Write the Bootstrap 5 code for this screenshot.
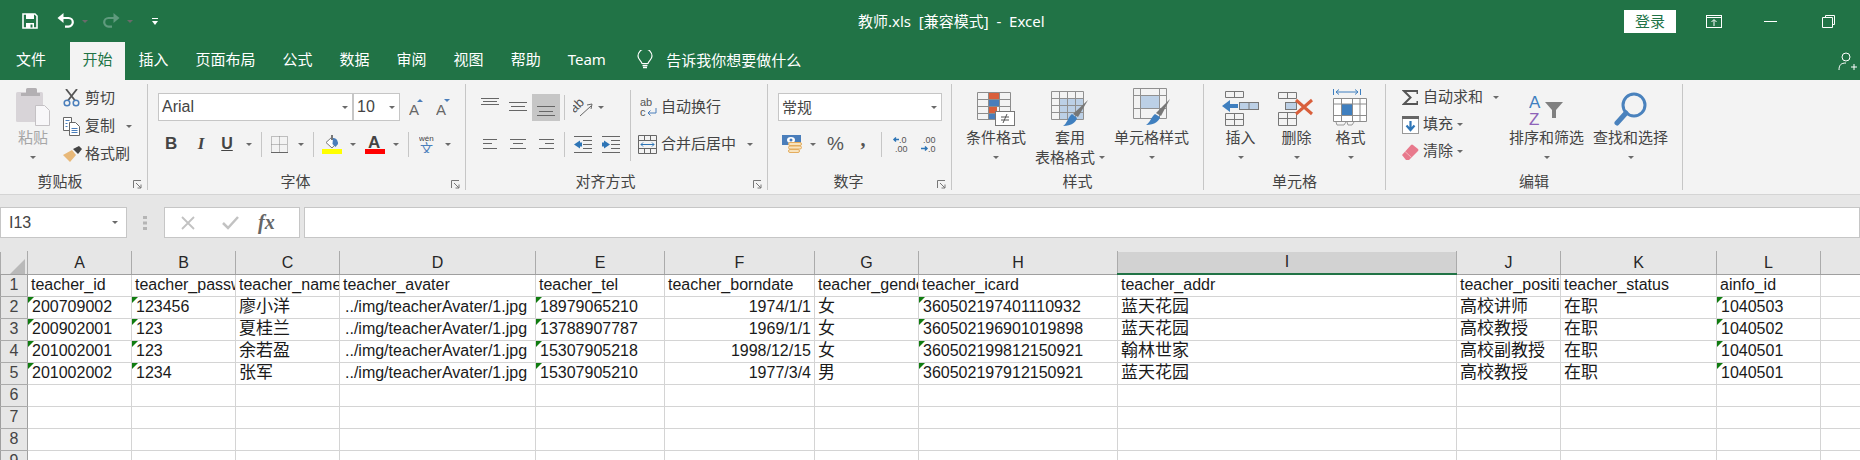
<!DOCTYPE html>
<html lang="zh-CN">

<head>
  <meta charset="UTF-8">
  <meta name="viewport" content="width=device-width, initial-scale=1.0">
  <title>教师.xls</title>
  <link href="https://cdn.jsdelivr.net/npm/bootstrap@5.3.0/dist/css/bootstrap.min.css" rel="stylesheet">
  <style>
    html, body { height: 460px; overflow: hidden; }
    body {
      background: #fff;
      color: #444;
      font-family: "Noto Sans", "Noto Sans CJK SC", sans-serif;
      font-size: 15px;
    }
    svg { display: block; flex: none; }
    .xl-title { height: 42px; background: #217346; color: #fff; }
    .xl-title-left { width: 858px; }
    .xl-login {
      width: 52px; height: 23px; padding: 0; border: 0; border-radius: 0;
      background: #fff; color: #217346; font-size: 15px; line-height: 23px;
    }
    .xl-login:hover { background: #fff; color: #217346; }
    .xl-wcaret { border-top-color: #fff; }
    .xl-dcaret { border-top-color: #5f9a7d; }
    .xl-tail { width: 25px; }
    .xl-tabs { height: 38px; background: #217346; color: #fff; position: relative; }
    .xl-tabs .nav-link { padding: 0 13.5px; color: #fff; line-height: 34px; height: 38px; font-size: 15px; }
    .xl-tabs .nav-link.active { background: #f3f3f3; color: #217346; padding: 0 12.5px; margin-left: 10.5px; }
    .xl-first { margin-left: 2.5px; }
    .xl-ask { font-size: 15px; padding-bottom: 2px; }
    .xl-person { position: absolute; right: 3px; top: 10px; }

    .xl-ribbon { height: 115px; background: #f3f3f3; border-bottom: 1px solid #d4d4d4; color: #444; }
    .rb-group { position: relative; height: 106px; margin-top: 4px; border-right: 1px solid #c6c6c6; flex: none; }
    .g1 { width: 148px; } .g2 { width: 318px; } .g3 { width: 302px; }
    .g4 { width: 184px; } .g5 { width: 252px; } .g6 { width: 182px; } .g7 { width: 297px; }
    .rb-body { height: 88px; }
    .rb-label { height: 18px; line-height: 18px; text-align: center; white-space: nowrap; }
    .has-launch { padding-right: 22px; }
    .g1 .has-launch { padding-right: 27px; }
    .rb-launch { position: absolute; right: 5px; bottom: 1px; }
    .rb-big { display: flex; flex-direction: column; align-items: center; flex: none; white-space: nowrap; }
    .rb-ico { height: 44px; padding-bottom: 2px; display: flex; align-items: flex-end; justify-content: center; }
    .rb-line { height: 20px; line-height: 18px; }
    .rb-line2 { height: 19px; line-height: 17px; display: flex; align-items: center; justify-content: center; }
    .rb-row { height: 28px; display: flex; align-items: center; white-space: nowrap; }
    .rb-row27 { height: 27px; display: flex; align-items: center; white-space: nowrap; }
    .rb-row26 { height: 26px; margin-top: 10px; display: flex; align-items: center; white-space: nowrap; }
    .rb-txt { padding-bottom: 2px; }
    .rb-caret {
      display: block; flex: none; width: 0; height: 0;
      border-left: 3px solid transparent; border-right: 3px solid transparent; border-top: 3px solid #6a6a6a;
    }
    .rb-sep { width: 1px; height: 25px; background: #c6c6c6; flex: none; }
    .rb-sep-tall { width: 1px; height: 71px; margin-top: 6px; background: #c6c6c6; flex: none; }
    .rb-combo {
      height: 28px; background: #fff; border: 1px solid #c6c6c6; padding: 0 4px 0 3px;
      display: flex; align-items: center; justify-content: space-between; flex: none;
      color: #444; font-size: 16px;
    }
    .rb-font { width: 195px; font-family: "Liberation Sans", sans-serif; }
    .rb-size { width: 47px; font-family: "Liberation Sans", sans-serif; }
    .rb-fmt { width: 164px; font-size: 15px; }
    .rb-b { width: 12px; text-align: center; font: bold 17px "Liberation Sans", sans-serif; color: #444; }
    .rb-i { width: 10px; text-align: center; font: italic bold 17px "Liberation Serif", serif; color: #444; }
    .rb-u { width: 12px; text-align: center; font: bold 16px "Liberation Sans", sans-serif; color: #444; text-decoration: underline; }
    .rb-pct { width: 16px; text-align: center; font: 19px "Liberation Sans", sans-serif; color: #555; }
    .rb-comma { width: 6px; padding-bottom: 10px; text-align: center; font: bold 20px "Liberation Serif", serif; color: #555; line-height: 14px; }
    .rb-muted { color: #a6a6a6; }
    .cw22 { width: 22px; flex: none; } .cw21 { width: 21px; flex: none; }
    .cw60 { width: 60px; } .cw62 { width: 62px; } .cw72 { width: 72px; } .cw75 { width: 75px; } .cw37 { width: 37px; }
    .cw107 { width: 107px; flex: none; } .cw164 { width: 164px; flex: none; }
    .ml4 { margin-left: 4px; } .ml3 { margin-left: 3px; } .ml5 { margin-left: 5px; }
    .ml7 { margin-left: 7px; } .ml8 { margin-left: 8px; } .ml9 { margin-left: 9px; } .ml10 { margin-left: 10px; }
    .ml11 { margin-left: 11px; } .ml12 { margin-left: 12px; } .ml13 { margin-left: 13px; } .ml14 { margin-left: 14px; }
    .ml15 { margin-left: 15px; } .ml16 { margin-left: 16px; } .ml17 { margin-left: 17px; } .ml18 { margin-left: 18px; }
    .ml19 { margin-left: 19px; } .ml22 { margin-left: 22px; } .ml27 { margin-left: 27px; } .ml30 { margin-left: 30px; }
    .ml42 { margin-left: 42px; } .ml45 { margin-left: 45px; }
    .pt9 { padding-top: 9px; } .pt10 { padding-top: 10px; }

    .xl-fbar { height: 56px; background: #e6e6e6; padding-top: 12px; }
    .xl-box { height: 31px; background: #fff; border: 1px solid #c6c6c6; flex: none; }
    .xl-name { width: 127px; padding: 0 8px; font: 16px "Liberation Sans", sans-serif; color: #444; }
    .xl-fx { width: 136px; }
    .xl-input { flex: 1 1 auto; margin-left: 4px; min-width: 0; }
    .xl-dots { margin-top: 9px; }
    .xl-fxtext { font: italic bold 20px "Liberation Serif", serif; color: #666; }

    .xl-sheet {
      table-layout: fixed; width: 1860px; margin: 0;
      font: 16px/20px "Liberation Sans", "Noto Sans CJK SC", sans-serif; color: #1a1a1a;
    }
    .xl-sheet>:not(caption)>*>* {
      padding: 0 3px 1px; height: 22px; border: 1px solid #d4d4d4; background: #fff; color: #1a1a1a;
      white-space: nowrap; overflow: hidden; position: relative; box-shadow: none;
    }
    .xl-sheet>thead>tr>th {
      height: 21px; background: #e6e6e6; color: #262626; font-weight: 400; text-align: center; padding: 0 0 1px;
      border-color: #e6e6e6 #ababab #9f9f9f #ababab;
    }
    .xl-sheet>thead>tr>th.xl-cur { background: #d2d2d2; border-bottom: 2px solid #217346; }
    .xl-sheet>tbody>tr>th {
      background: #e6e6e6; color: #444; font-weight: 400; text-align: center; padding: 0 0 1px;
      border-color: #ababab #9f9f9f;
    }
    .xl-sheet>thead>tr>th.xl-corner { padding: 0; }
    .xl-corner svg { margin: 3px 0 0 9px; }
    .xl-cjk { font-size: 17px; }
    .xl-sheet>tbody>tr>td.xl-wide { padding-left: 5px; }
    .xl-sheet>tbody>tr>td.xl-mark { padding-left: 4px; }
    .xl-mark::before {
      content: ""; position: absolute; left: 0; top: 0; width: 0; height: 0;
      border-top: 6px solid #107c10; border-right: 6px solid transparent;
    }
  </style>
</head>

<body>
  <!-- title bar -->
  <div class="xl-title d-flex align-items-center">
    <div class="xl-title-left d-flex align-items-center">
      <svg class="ml22" width="16" height="16" viewBox="0 0 16 16"><path d="M1 1h12l2 2v12H1z" fill="none" stroke="#fff" stroke-width="1.6"/><path d="M4 1h8v5H4zM4 10h8v5H4z" fill="#fff"/><rect x="8.5" y="11.5" width="2" height="3" fill="#217346"/></svg>
      <svg class="ml19" width="18" height="16" viewBox="0 0 18 16"><path d="M5 5h6.5a4.3 4.3 0 0 1 0 8.6H8" fill="none" stroke="#fff" stroke-width="2.2"/><path d="M6.5 0 0.5 5l6 5z" fill="#fff"/></svg>
      <i class="rb-caret ml7 xl-wcaret"></i>
      <svg class="ml14" width="18" height="16" viewBox="0 0 18 16"><path d="M13 5H6.500a4.300 4.300 0 0 0 0 8.600H10" fill="none" stroke="#5f9a7d" stroke-width="2.200"/><path d="M11.500 0l6 5-6 5z" fill="#5f9a7d"/></svg>
      <i class="rb-caret ml7 xl-dcaret"></i>
      <svg class="ml19" width="6" height="7" viewBox="0 0 6 7"><rect width="6" height="1" fill="#fff"/><path d="M0 3h6L3 7z" fill="#fff"/></svg>
    </div>
    <div class="text-nowrap">教师.xls&nbsp; [兼容模式]&nbsp; -&nbsp; Excel</div>
    <div class="ms-auto d-flex align-items-center">
      <button class="btn xl-login" type="button">登录</button>
      <svg class="ml30" width="16" height="13" viewBox="0 0 16 13"><rect x=".5" y=".5" width="15" height="12" fill="none" stroke="#fff"/><path d="M.5 2.500h15M8 11V5M5.500 7 8 4.500 10.500 7" fill="none" stroke="#fff"/></svg>
      <svg class="ml42" width="13" height="1" viewBox="0 0 13 1"><rect width="13" height="1" fill="#fff"/></svg>
      <svg class="ml45" width="13" height="13" viewBox="0 0 13 13"><path d="M3.500 2.500V.5h9v9h-2M.5 2.500h10v10H.5z" fill="none" stroke="#fff"/></svg>
      <div class="xl-tail"></div>
    </div>
  </div>

  <!-- tabs -->
  <div class="xl-tabs d-flex">
    <ul class="nav flex-nowrap text-nowrap">
      <li class="nav-item xl-first"><a class="nav-link" href="#">文件</a></li>
      <li class="nav-item"><a class="nav-link active" href="#">开始</a></li>
      <li class="nav-item"><a class="nav-link" href="#">插入</a></li>
      <li class="nav-item"><a class="nav-link" href="#">页面布局</a></li>
      <li class="nav-item"><a class="nav-link" href="#">公式</a></li>
      <li class="nav-item"><a class="nav-link" href="#">数据</a></li>
      <li class="nav-item"><a class="nav-link" href="#">审阅</a></li>
      <li class="nav-item"><a class="nav-link" href="#">视图</a></li>
      <li class="nav-item"><a class="nav-link" href="#">帮助</a></li>
      <li class="nav-item"><a class="nav-link" href="#">Team</a></li>
    </ul>
    <div class="d-flex align-items-center xl-ask ml18">
      <svg width="16" height="20" viewBox="0 0 16 20"><path d="M5 13.500C4.500 11 1 9.500 1 6a7 7 0 0 1 14 0c0 3.500-3.500 5-4 7.500z" fill="none" stroke="#fff" stroke-width="1.200"/><path d="M5.500 15.500h5M6 17.500h4" stroke="#fff" stroke-width="1.300"/></svg>
      <span class="ml13">告诉我你想要做什么</span>
    </div>
    <svg class="xl-person" width="19" height="19" viewBox="0 0 19 19"><circle cx="8" cy="5" r="4" fill="none" stroke="#fff"/><path d="M1 18c0-5 2-7 7-7M13 15h6M16 12v6" fill="none" stroke="#fff"/></svg>
  </div>

  <!-- ribbon -->
  <div class="xl-ribbon d-flex">
    <!-- clipboard -->
    <div class="rb-group g1">
      <div class="rb-body d-flex">
        <div class="rb-big cw60 ml3">
          <div class="rb-ico">
            <svg width="34" height="38" viewBox="0 0 34 38"><rect y="4" width="27" height="30" rx="1.500" fill="#d8d4d8"/><path d="M5 8V5h5V1.500Q10 0 11.500 0h8Q21 0 21 1.500V5h3v3z" fill="#b3b0b3"/><path d="M19.500 17.500h9l5 5v15h-14z" fill="#f8f7f9" stroke="#c4c1c4"/></svg>
          </div>
          <div class="rb-line rb-muted">粘贴</div>
          <div class="rb-line2"><i class="rb-caret"></i></div>
        </div>
        <div>
          <div class="rb-row">
            <div class="cw22"><svg width="17" height="18" viewBox="0 0 17 18"><path d="M3 0l9 11.500M14 0 5 11.500" stroke="#555" stroke-width="1.800"/><circle cx="4" cy="14" r="2.800" fill="none" stroke="#4a7ebb" stroke-width="1.500"/><circle cx="13" cy="14" r="2.800" fill="none" stroke="#4a7ebb" stroke-width="1.500"/></svg></div>
            <span class="rb-txt">剪切</span>
          </div>
          <div class="rb-row">
            <div class="cw22"><svg width="17" height="19" viewBox="0 0 17 19"><path d="M.5.5h8v13H.5z" fill="#fff" stroke="#666"/><path d="M6.500 5.500h6l4 4v9h-10z" fill="#fff" stroke="#666"/><path d="M8.500 11.500h6M8.500 13.500h6M8.500 15.500h6M2.500 3.500h4M2.500 6.500h2M2.500 9.500h2" stroke="#4a7ebb"/></svg></div>
            <span class="rb-txt">复制</span><i class="rb-caret ml11"></i>
          </div>
          <div class="rb-row">
            <div class="cw22"><svg width="19" height="16" viewBox="0 0 19 16"><path d="M0 9l9-5 4 5-6 7z" fill="#e8b878"/><path d="M10 3l6-3 3 3-4 5z" fill="#444"/></svg></div>
            <span class="rb-txt">格式刷</span>
          </div>
        </div>
      </div>
      <div class="rb-label has-launch">剪贴板</div>
      <svg class="rb-launch" width="9" height="9" viewBox="0 0 9 9"><path d="M.5 8V.5H8M3 3l5 5M8 4.500V8H4.500" fill="none" stroke="#777"/></svg>
    </div>

    <!-- font -->
    <div class="rb-group g2">
      <div class="rb-body pt9 ml10">
        <div class="rb-row">
          <div class="rb-combo rb-font"><span>Arial</span><i class="rb-caret"></i></div>
          <div class="rb-combo rb-size"><span>10</span><i class="rb-caret"></i></div>
          <svg class="ml9" width="16" height="17" viewBox="0 0 16 17"><text x="0" y="16" font-family="Liberation Sans" font-size="15" fill="#666">A</text><path d="M8 3l3-3 3 3z" fill="#4a7ebb"/></svg>
          <svg class="ml11" width="16" height="17" viewBox="0 0 16 17"><text x="0" y="16" font-family="Liberation Sans" font-size="15" fill="#666">A</text><path d="M8 0h6l-3 3z" fill="#4a7ebb"/></svg>
        </div>
        <div class="rb-row26">
          <span class="rb-b ml7">B</span>
          <span class="rb-i ml19">I</span>
          <span class="rb-u ml15">U</span>
          <i class="rb-caret ml13"></i>
          <div class="rb-sep ml9"></div>
          <svg class="ml9" width="17" height="17" viewBox="0 0 17 17"><path d="M.5.5h16v16H.5zM8.500.5v16M.5 8.500h16" fill="none" stroke="#888" stroke-dasharray="1 1"/><path d="M0 16.500h17" stroke="#666"/></svg>
          <i class="rb-caret ml10"></i>
          <div class="rb-sep ml9"></div>
          <svg class="ml8" width="20" height="19" viewBox="0 0 20 19"><path d="M4 7.500 10 2l5 5.500-5 5.500z" fill="#fff" stroke="#777"/><path d="M9 0h2v5H9z" fill="#777"/><path d="M11 3c3 0 5 2 5 6l-2.500 3-3-3z" fill="#4a7ebb"/><rect y="14" width="20" height="5" fill="#ff0"/></svg>
          <i class="rb-caret ml8"></i>
          <svg class="ml9" width="20" height="19" viewBox="0 0 20 19"><text x="3" y="13" font-family="Liberation Sans" font-weight="bold" font-size="17" fill="#444">A</text><rect y="14" width="20" height="5" fill="#f00"/></svg>
          <i class="rb-caret ml8"></i>
          <div class="rb-sep ml9"></div>
          <svg class="ml10" width="16" height="18" viewBox="0 0 16 18"><text x="0" y="6" font-family="Liberation Sans" font-size="8" fill="#444">wén</text><text x="1" y="18" font-family="Noto Sans CJK SC" font-size="13" fill="#4a7ebb">文</text></svg>
          <i class="rb-caret ml10"></i>
        </div>
      </div>
      <div class="rb-label has-launch">字体</div>
      <svg class="rb-launch" width="9" height="9" viewBox="0 0 9 9"><path d="M.5 8V.5H8M3 3l5 5M8 4.500V8H4.500" fill="none" stroke="#777"/></svg>
    </div>

    <!-- alignment -->
    <div class="rb-group g3">
      <div class="rb-body d-flex">
        <div class="cw164 pt10">
          <div class="rb-row27">
            <svg class="ml15" width="18" height="27" viewBox="0 0 18 27"><path d="M0 4.500h18M2 7.500h14M0 10.500h18" stroke="#666"/></svg>
            <svg class="ml10" width="18" height="27" viewBox="0 0 18 27"><path d="M0 8.500h18M2 12.500h14M0 16.500h18" stroke="#666"/></svg>
            <svg class="ml5" width="28" height="27" viewBox="0 0 28 27"><rect width="28" height="27" fill="#c6c6c6"/><path d="M5 12.500h18M7 17.500h14M5 21.500h18" stroke="#666"/></svg>
            <div class="rb-sep ml4"></div>
            <svg class="ml8" width="20" height="18" viewBox="0 0 20 18"><text x="1" y="13" transform="rotate(-45 3 13)" font-family="Liberation Sans" font-size="13" fill="#555">ab</text><path d="M7 17 18 7M14 6l5-1-1 5" fill="none" stroke="#666"/></svg>
            <i class="rb-caret ml5"></i>
          </div>
          <div class="rb-row26">
            <svg class="ml17" width="14" height="10" viewBox="0 0 14 10"><path d="M0 .5h14M0 4.500h9M0 9.500h14" stroke="#666"/></svg>
            <svg class="ml13" width="16" height="10" viewBox="0 0 16 10"><path d="M0 .5h16M3 4.500h10M0 9.500h16" stroke="#666"/></svg>
            <svg class="ml13" width="15" height="10" viewBox="0 0 15 10"><path d="M0 .5h15M6 4.500h9M0 9.500h15" stroke="#666"/></svg>
            <div class="rb-sep ml10"></div>
            <svg class="ml9" width="18" height="17" viewBox="0 0 18 17"><path d="M0 .5h18M9 4.500h9M9 8.500h9M9 12.500h9M0 16.500h18" stroke="#666"/><path d="M6 4.500v2h2v4H6v2L0 8.500z" fill="#2e75b6"/></svg>
            <svg class="ml10" width="18" height="17" viewBox="0 0 18 17"><path d="M0 .5h18M9 4.500h9M9 8.500h9M9 12.500h9M0 16.500h18" stroke="#666"/><path d="M2 4.500v2H0v4h2v2l6-4z" fill="#2e75b6"/></svg>
          </div>
        </div>
        <div class="rb-sep-tall"></div>
        <div class="pt10">
          <div class="rb-row27">
            <svg class="ml9" width="17" height="19" viewBox="0 0 17 19"><text x="0" y="8" font-family="Liberation Sans" font-size="11" fill="#555">ab</text><text x="0" y="18" font-family="Liberation Sans" font-size="11" fill="#555">c</text><path d="M16 10v5H8M10.500 12.500 8 15l2.500 2.500" fill="none" stroke="#4a7ebb"/></svg>
            <span class="ml4 rb-txt">自动换行</span>
          </div>
          <div class="rb-row26">
            <svg class="ml7" width="19" height="19" viewBox="0 0 19 19"><path d="M.5.5h18v18H.5zM.5 5.500h18M.5 13.500h18M6.500.5v5M12.500.5v5M6.500 13.500v5M12.500 13.500v5" fill="none" stroke="#666"/><path d="M3 9.500h13M5 7.500l-2 2 2 2M14 7.500l2 2-2 2" fill="none" stroke="#2e75b6"/></svg>
            <span class="ml4 rb-txt">合并后居中</span>
            <i class="rb-caret ml11"></i>
          </div>
        </div>
      </div>
      <div class="rb-label has-launch">对齐方式</div>
      <svg class="rb-launch" width="9" height="9" viewBox="0 0 9 9"><path d="M.5 8V.5H8M3 3l5 5M8 4.500V8H4.500" fill="none" stroke="#777"/></svg>
    </div>

    <!-- number -->
    <div class="rb-group g4">
      <div class="rb-body pt9">
        <div class="rb-row">
          <div class="rb-combo rb-fmt ml10"><span>常规</span><i class="rb-caret"></i></div>
        </div>
        <div class="rb-row26">
          <svg class="ml14" width="20" height="19" viewBox="0 0 20 19"><rect width="19" height="10" fill="#4a7ebb"/><ellipse cx="9" cy="5" rx="4" ry="3" fill="#fff"/><circle cx="9" cy="5" r="1.500" fill="#4a7ebb"/><rect x="6.500" y="7.500" width="13" height="3" rx="1.500" fill="#f8e3bd" stroke="#e4ad5f"/><rect x="6.500" y="11" width="13" height="3" rx="1.500" fill="#f8e3bd" stroke="#e4ad5f"/><rect x="6.500" y="14.500" width="11" height="3" rx="1.500" fill="#f8e3bd" stroke="#e4ad5f"/></svg>
          <i class="rb-caret ml8"></i>
          <span class="rb-pct ml11">%</span>
          <span class="rb-comma ml17">,</span>
          <div class="rb-sep ml15"></div>
          <svg class="ml10" width="16" height="17" viewBox="0 0 16 17"><text x="7" y="7" font-family="Liberation Sans" font-size="9" fill="#555">.0</text><text x="3" y="16" font-family="Liberation Sans" font-size="9" fill="#555">.00</text><path d="M7 3.500H2M4 1.500l-2 2 2 2" fill="none" stroke="#2e75b6" stroke-width="1.500"/></svg>
          <svg class="ml12" width="16" height="17" viewBox="0 0 16 17"><text x="3" y="7" font-family="Liberation Sans" font-size="9" fill="#555">.00</text><text x="8" y="16" font-family="Liberation Sans" font-size="9" fill="#555">.0</text><path d="M1 12.500h6M5 10.500l2 2-2 2" fill="none" stroke="#2e75b6" stroke-width="1.500"/></svg>
        </div>
      </div>
      <div class="rb-label has-launch">数字</div>
      <svg class="rb-launch" width="9" height="9" viewBox="0 0 9 9"><path d="M.5 8V.5H8M3 3l5 5M8 4.500V8H4.500" fill="none" stroke="#777"/></svg>
    </div>

    <!-- styles -->
    <div class="rb-group g5">
      <div class="rb-body d-flex">
        <div class="rb-big cw62 ml13">
          <div class="rb-ico">
            <svg width="38" height="34" viewBox="0 0 38 34"><rect x="11" y="1" width="11" height="7" fill="#d95f3b"/><rect x="11" y="8" width="12" height="7" fill="#4a7ebb"/><rect x="11" y="15" width="9" height="7" fill="#d95f3b"/><rect x="11" y="22" width="7" height="6" fill="#4a7ebb"/><path d="M.5.5h33v27H.5zM.5 7.500h33M.5 14.500h33M.5 21.500h33M11.500.5v27M22.500.5v27" fill="none" stroke="#8c8c8c"/><rect x="18.500" y="19.500" width="19" height="14" fill="#fff" stroke="#777"/><path d="M24 25h8M24 28h8M30 22l-4 9" fill="none" stroke="#555"/></svg>
          </div>
          <div class="rb-line">条件格式</div>
          <div class="rb-line2"><i class="rb-caret"></i></div>
        </div>
        <div class="rb-big cw72 ml7">
          <div class="rb-ico">
            <svg width="38" height="35" viewBox="0 0 38 35"><rect x="8" y="8" width="24" height="20" fill="#bcd0e6"/><path d="M.5.5h32v28H.5zM.5 7.500h32M.5 14.500h32M.5 21.500h32M8.500.5v28M16.500.5v28M24.500.5v28" fill="none" stroke="#909090"/><path d="M37 9 27 26l-5-3z" fill="#777"/><path d="M21 23l5 4c-1 4-5 8-14 8 4-2 5-9 9-12z" fill="#3f7fbf"/></svg>
          </div>
          <div class="rb-line">套用</div>
          <div class="rb-line2">表格格式<i class="rb-caret ml4"></i></div>
        </div>
        <div class="rb-big cw75 ml8">
          <div class="rb-ico">
            <svg width="38" height="38" viewBox="0 0 38 38"><rect x="8" y="8" width="18" height="13" fill="#bcd0e6"/><path d="M.5.5h33v30H.5zM.5 7.500h33M.5 20.500h33M7.500.5v30M26.500.5v30" fill="none" stroke="#909090"/><path d="M37 11 28 28l-5-3z" fill="#777"/><path d="M22 26l5 3c-1 4-5 8-14 8 4-2 5-8 9-11z" fill="#3f7fbf"/></svg>
          </div>
          <div class="rb-line">单元格样式</div>
          <div class="rb-line2"><i class="rb-caret"></i></div>
        </div>
      </div>
      <div class="rb-label">样式</div>
    </div>

    <!-- cells -->
    <div class="rb-group g6">
      <div class="rb-body d-flex">
        <div class="rb-big cw37 ml18">
          <div class="rb-ico">
            <svg width="37" height="35" viewBox="0 0 37 35"><path d="M3.500.5h18v6h-18zM12.500.5v6M3.500 22.500h18v12h-18zM12.500 22.500v12M3.500 28.500h18" fill="none" stroke="#777"/><rect x="17.500" y="11.500" width="19" height="7" fill="#bcd0e6" stroke="#777"/><path d="M27 11.500v7" stroke="#777"/><path d="M0 15 8 9v4h8v4H8v4z" fill="#3f7fbf"/></svg>
          </div>
          <div class="rb-line">插入</div>
          <div class="rb-line2"><i class="rb-caret"></i></div>
        </div>
        <div class="rb-big cw37 ml19">
          <div class="rb-ico">
            <svg width="37" height="34" viewBox="0 0 37 34"><path d="M.5.5h18v6H.5zM9.500.5v6M.5 20.500h18v13H.5zM9.500 20.500v13M.5 26.500h18" fill="none" stroke="#777"/><rect x="7.500" y="10.500" width="11" height="7" fill="#bcd0e6" stroke="#777"/><path d="M18 8 34 22M34 8 18 22" stroke="#d95f3b" stroke-width="3"/></svg>
          </div>
          <div class="rb-line">删除</div>
          <div class="rb-line2"><i class="rb-caret"></i></div>
        </div>
        <div class="rb-big cw37 ml17">
          <div class="rb-ico">
            <svg width="35" height="37" viewBox="0 0 35 37"><path d="M.5 0v6M27.500 0v6M3 3h22M6 .5 3 3l3 2.500M22 .5 25 3l-3 2.500" fill="none" stroke="#3f7fbf"/><rect x=".5" y="9.500" width="33" height="23" fill="#fff"/><rect x="9" y="15" width="10" height="11" fill="#3f7fbf"/><path d="M.5 9.500h33v23H.5zM.5 15h33M.5 26.500h33M8.500 9.500v23M19.500 9.500v23M27 9.500v23" fill="none" stroke="#8c8c8c"/><path d="M3 33l1 3h7l2-3M14 33l1 3h4l2-3" fill="none" stroke="#999"/></svg>
          </div>
          <div class="rb-line">格式</div>
          <div class="rb-line2"><i class="rb-caret"></i></div>
        </div>
      </div>
      <div class="rb-label">单元格</div>
    </div>

    <!-- editing -->
    <div class="rb-group g7">
      <div class="rb-body d-flex">
        <div class="cw107 ml16">
          <div class="rb-row27">
            <div class="cw21"><svg width="16" height="15" viewBox="0 0 16 15"><path d="M15.500 4V1H2l6.500 6.500L2 14h13.500v-3" fill="none" stroke="#555" stroke-width="2"/></svg></div>
            <span class="rb-txt">自动求和</span><i class="rb-caret ml10"></i>
          </div>
          <div class="rb-row27">
            <div class="cw21"><svg width="17" height="18" viewBox="0 0 17 18"><rect x=".5" y=".5" width="16" height="17" fill="#fff" stroke="#999"/><rect width="17" height="3" fill="#666"/><path d="M8.500 5v8M4.500 9.500l4 4.500 4-4.500" fill="none" stroke="#2e75b6" stroke-width="2.200"/></svg></div>
            <span class="rb-txt">填充</span><i class="rb-caret ml4"></i>
          </div>
          <div class="rb-row27">
            <div class="cw21"><svg width="17" height="16" viewBox="0 0 17 16"><path d="M0 11 9 1q1-1 2 0l5 4q1 1 0 2L7 16H4z" fill="#e8798c"/><path d="M3 7.500 10 14" stroke="#f3b6c0"/></svg></div>
            <span class="rb-txt">清除</span><i class="rb-caret ml4"></i>
          </div>
        </div>
        <div class="rb-big cw75">
          <div class="rb-ico">
            <svg width="36" height="32" viewBox="0 0 36 32"><text x="0" y="14" font-family="Liberation Sans" font-size="17" fill="#3f7fbf">A</text><text x="0" y="31" font-family="Liberation Sans" font-size="17" fill="#8e63b8">Z</text><path d="M16 8h18l-7 8v8h-4v-8z" fill="#808080"/></svg>
          </div>
          <div class="rb-line">排序和筛选</div>
          <div class="rb-line2"><i class="rb-caret"></i></div>
        </div>
        <div class="rb-big cw75 ml9">
          <div class="rb-ico">
            <svg width="36" height="34" viewBox="0 0 36 34"><circle cx="21" cy="13" r="11" fill="none" stroke="#4a82bd" stroke-width="3"/><path d="M13 21 4 31" stroke="#4a82bd" stroke-width="5" stroke-linecap="round"/></svg>
          </div>
          <div class="rb-line">查找和选择</div>
          <div class="rb-line2"><i class="rb-caret"></i></div>
        </div>
      </div>
      <div class="rb-label">编辑</div>
    </div>
  </div>

  <!-- formula bar -->
  <div class="xl-fbar d-flex">
    <div class="xl-box xl-name d-flex align-items-center justify-content-between"><span>I13</span><i class="rb-caret"></i></div>
    <svg class="xl-dots ml16" width="5" height="14" viewBox="0 0 5 14"><path d="M0 0h4v3H0zM0 5.500h4v3H0zM0 11h4v3H0z" fill="#b5b5b5"/></svg>
    <div class="xl-box xl-fx ml16 d-flex align-items-center">
      <svg class="ml16" width="14" height="14" viewBox="0 0 14 14"><path d="M1 1l12 12M13 1 1 13" stroke="#c2c2c2" stroke-width="1.800"/></svg>
      <svg class="ml27" width="17" height="14" viewBox="0 0 17 14"><path d="M1 7l5 5L16 1" fill="none" stroke="#c2c2c2" stroke-width="2.500"/></svg>
      <span class="xl-fxtext ml19">fx</span>
    </div>
    <div class="xl-box xl-input"></div>
  </div>

  <!-- sheet -->
  <table class="table table-bordered xl-sheet" id="sheet"></table>

  <script src="https://cdn.jsdelivr.net/npm/bootstrap@5.3.0/dist/js/bootstrap.bundle.min.js"></script>
  <script>
    const widths = [27, 104, 104, 104, 196, 129, 150, 104, 199, 339, 104, 156, 104, 40];
    const letters = ['', 'A', 'B', 'C', 'D', 'E', 'F', 'G', 'H', 'I', 'J', 'K', 'L', ''];
    const avatar = '../img/teacherAvater/1.jpg';
    const rows = [
      ['teacher_id', 'teacher_password', 'teacher_name', 'teacher_avater', 'teacher_tel', 'teacher_borndate', 'teacher_gender', 'teacher_icard', 'teacher_addr', 'teacher_position', 'teacher_status', 'ainfo_id'],
      ['200709002', '123456', '廖小洋', avatar, '18979065210', '1974/1/1', '女', '360502197401110932', '蓝天花园', '高校讲师', '在职', '1040503'],
      ['200902001', '123', '夏桂兰', avatar, '13788907787', '1969/1/1', '女', '360502196901019898', '蓝天花园', '高校教授', '在职', '1040502'],
      ['201002001', '123', '余若盈', avatar, '15307905218', '1998/12/15', '女', '360502199812150921', '翰林世家', '高校副教授', '在职', '1040501'],
      ['201002002', '1234', '张军', avatar, '15307905210', '1977/3/4', '男', '360502197912150921', '蓝天花园', '高校教授', '在职', '1040501']
    ];
    const marked = [0, 1, 4, 7, 11];

    function cellClass(text, row, col) {
      const names = [];
      if (/[^\x00-\x7f]/.test(text)) names.push('xl-cjk');
      if (text && row > 0 && marked.includes(col)) names.push('xl-mark');
      if (row > 0 && col === 3) names.push('xl-wide');
      if (row > 0 && col === 5) names.push('text-end');
      return names.join(' ');
    }

    function renderSheet() {
      let html = '<colgroup>' + widths.map(w => `<col width="${w}">`).join('') + '</colgroup><thead><tr>';
      letters.forEach((name, i) => {
        if (i === 0) {
          html += '<th class="xl-corner"><svg width="15" height="15" viewBox="0 0 15 15"><path d="M15 0v15H0z" fill="#b9b9b9"/></svg></th>';
        } else {
          html += `<th class="${name === 'I' ? 'xl-cur' : ''}">${name}</th>`;
        }
      });
      html += '</tr></thead><tbody>';
      for (let r = 0; r < 9; r++) {
        html += `<tr><th>${r + 1}</th>`;
        for (let c = 0; c < 13; c++) {
          const text = (rows[r] && rows[r][c]) || '';
          html += `<td class="${cellClass(text, r, c)}">${text}</td>`;
        }
        html += '</tr>';
      }
      document.getElementById('sheet').innerHTML = html + '</tbody>';
    }

    renderSheet();
  </script>
</body>

</html>
